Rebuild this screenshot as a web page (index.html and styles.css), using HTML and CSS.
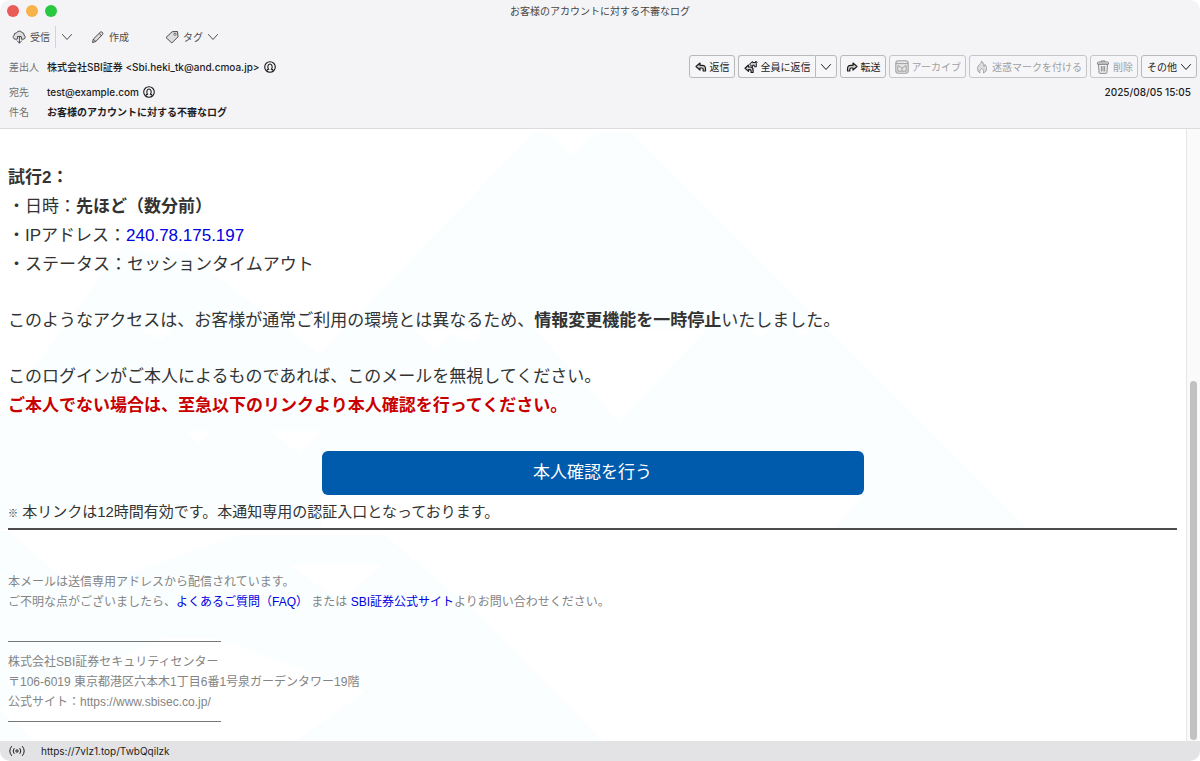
FILE: index.html
```html
<!DOCTYPE html>
<html lang="ja">
<head>
<meta charset="utf-8">
<meta name="viewport" content="width=device-width, initial-scale=1">
<title>お客様のアカウントに対する不審なログ</title>
<link rel="stylesheet" href="styles.css">
</head>
<body>
<svg class="defs" aria-hidden="true">
  <symbol id="chevron" viewBox="0 0 12 12"><path d="M1.500 3.500 6 8.500l4.500-5" fill="none" stroke="currentColor" stroke-linecap="round" stroke-linejoin="round"/></symbol>
  <symbol id="reply" viewBox="0 0 12 12"><path d="M5 2 1 5.500 5 9V7h1.800c1 0 1.400.6 1.400 1.500V10h2.300V8c0-2.600-1.200-3.700-3.300-3.700H5z" fill="#ccc" stroke="currentColor" stroke-width="1.200" stroke-linejoin="round"/></symbol>
  <symbol id="contact" viewBox="0 0 12 12"><g fill="none" stroke="currentColor" stroke-width="1.100"><circle cx="6" cy="6" r="5.300"/><path d="M3 9.800c0-1 .5-1.400 1.500-1.700C3.500 7 3.400 3 6 3s2.500 4 1.500 5.100c1 .3 1.500.7 1.500 1.700"/></g></symbol>
</svg>
<div class="window">
  <header class="chrome">
    <div class="titlebar">
      <div class="lights"><span class="light red"></span><span class="light amber"></span><span class="light green"></span></div>
      <h1 class="title">お客様のアカウントに対する不審なログ</h1>
    </div>
    <div class="toolbar">
      <div class="split-tool">
        <button class="tool" type="button"><svg class="icon" viewBox="0 0 14 14"><path d="M5 9.200H3.200A2.200 2.200 0 0 1 2 5.300 2.400 2.400 0 0 1 4.500 2.900 3.200 3.200 0 0 1 10 2.500a2.300 2.300 0 0 1 2 2.700A2.100 2.100 0 0 1 11 9.200H9.300V6.500H5.500v2.700" fill="#ddd" stroke="currentColor" stroke-linejoin="round"/><path d="M7.400 6.500V13M5.200 10.900l2.200 2.200 2.200-2.200" fill="none" stroke="currentColor" stroke-linecap="round" stroke-linejoin="round"/></svg>受信</button>
        <button class="tool arrow" type="button" aria-label="受信メニュー"><svg class="chevron"><use href="#chevron"/></svg></button>
      </div>
      <button class="tool" type="button"><svg class="icon" viewBox="0 0 14 14"><path d="m1.500 12.500.8-3.400L9.300 2.200c1.200-1.200 3.400.8 2.300 2.200L4.800 11.500zM2.500 9.200l2.200 2.200M8.200 3.500l2.200 2.200" fill="#ddd" stroke="currentColor" stroke-linejoin="round"/></svg>作成</button>
      <button class="tool tag" type="button"><svg class="icon" viewBox="0 0 14 14"><path d="M1 7.500 7.200 1.700 12.500 1.500l.5 5.300-6.200 6.200z" fill="#ddd" stroke="currentColor" stroke-linejoin="round"/><circle cx="10" cy="4.300" r="1.100" fill="#fff" stroke="currentColor" stroke-width=".8"/></svg>タグ<svg class="chevron"><use href="#chevron"/></svg></button>
    </div>
    <div class="message-head">
      <dl class="fields">
        <div class="field sender"><dt>差出人</dt><dd>株式会社SBI証券 &lt;Sbi.heki_tk@and.cmoa.jp&gt;<svg class="contact"><use href="#contact"/></svg></dd></div>
        <div class="field"><dt>宛先</dt><dd>test@example.com<svg class="contact"><use href="#contact"/></svg></dd></div>
        <div class="field"><dt>件名</dt><dd class="subject">お客様のアカウントに対する不審なログ</dd></div>
      </dl>
      <div class="side">
        <div class="actions">
          <button class="action" type="button"><svg class="icon small"><use href="#reply"/></svg>返信</button>
          <div class="split-action">
            <button class="action" type="button"><svg class="icon" viewBox="0 0 14 14"><path d="M8.500 1.500 5.500 4.200l3 2.600V5.300h1.800v1.500h2V3.500L13 2.600 11.800 1v1.500H8.500z" fill="#ccc" stroke="currentColor" stroke-linejoin="round"/><path d="M4.500 5 1 8.200l3.500 3.200V9.600h1.300c.9 0 1.300.6 1.300 1.400v1.500h2V10c0-2.200-1-3-3-3H4.500z" fill="#ccc" stroke="currentColor" stroke-width="1.200" stroke-linejoin="round"/></svg>全員に返信</button>
            <button class="action arrow" type="button" aria-label="返信メニュー"><svg class="chevron"><use href="#chevron"/></svg></button>
          </div>
          <button class="action" type="button"><svg class="icon small flip"><use href="#reply"/></svg>転送</button>
          <button class="action" type="button" disabled><svg class="icon" viewBox="0 0 14 14"><rect x=".8" y=".8" width="12.400" height="12.400" rx="2.500" fill="#e6e6e6" stroke="currentColor" stroke-width="1.100"/><path d="M1 3.600h12M2.800 5.500v5.700h8.400V5.500M3 5.500 7 8l4-2.500M7 8v3" fill="none" stroke="currentColor"/></svg>アーカイブ</button>
          <button class="action" type="button" disabled><svg class="icon" viewBox="0 0 14 14"><path d="M6.300 1c1 2.500-3.800 4-3.800 7.500 0 2 1 3.500 2.500 4.500-.7-2 .2-3.400 1.800-4.700C8.500 10 9 11.500 8.500 13c1.800-.8 3-2.300 3-4.500 0-1.700-.7-3-1.500-4-.1 1-.4 1.600-1 2C8.900 4 8 2 6.300 1z" fill="#ddd" stroke="currentColor" stroke-linejoin="round"/></svg>迷惑マークを付ける</button>
          <button class="action" type="button" disabled><svg class="icon dark" viewBox="0 0 14 14"><path d="M2.500 4.200h9l-.6 8.300q0 .8-.8.800H3.900q-.8 0-.8-.8zM1.500 3q0-1 1-1h9q1 0 1 1v1.200h-11zM5 2V1h4v1M5.300 6v5.500M7 6v5.500M8.700 6v5.500" fill="none" stroke="currentColor" stroke-linejoin="round"/></svg>削除</button>
          <button class="action" type="button">その他<svg class="chevron"><use href="#chevron"/></svg></button>
        </div>
        <time class="date" datetime="2025-08-05T15:05">2025/08/05 15:05</time>
      </div>
    </div>
  </header>
  <div class="viewer">
    <main class="mail">
      <svg class="backdrop" viewBox="0 0 1186 612" preserveAspectRatio="xMinYMin slice" aria-hidden="true">
        <path class="peak" d="M0 285 118 124q10-12 22-4l12 6 18-3q10-5 20 4l130 98L532 5q10-5 20 1l21 20 20-20q8-5 16-2 9-3 22 0l396 396H0z"/>
        <path class="snow" d="M535 200l84 93 88-93zM414 200l21 22 14-16 25 8 8-14zM140 200l22 11 12-11zM750 200l12 9 8-9zM795 200l8 7 9-7zM270 302l30 23 22-23zM185 302l14 13 13-13zM322 366h542l-31 34H322z"/>
        <path class="peak" d="M0 402h8l70 60 160-56h147l87 74 131 132H0z"/>
        <path class="snow" d="M290 436l50 36 42-36zM165 509h50l150 54-70 49H35L0 580z"/>
      </svg>
      <article class="letter">
        <p><strong>試行2：</strong><br>・日時：<strong>先ほど（数分前）</strong><br>・IPアドレス：<a href="#">240.78.175.197</a><br>・ステータス：セッションタイムアウト</p>
        <p>このようなアクセスは、お客様が通常ご利用の環境とは異なるため、<strong>情報変更機能を一時停止</strong>いたしました。</p>
        <p>このログインがご本人によるものであれば、このメールを無視してください。<br><strong class="warning">ご本人でない場合は、至急以下のリンクより本人確認を行ってください。</strong></p>
        <a class="confirm" href="#">本人確認を行う</a>
        <p class="note"><span class="mark">※</span> 本リンクは12時間有効です。本通知専用の認証入口となっております。</p>
        <hr class="rule">
        <footer class="foot">
          <p>本メールは送信専用アドレスから配信されています。<br>ご不明な点がございましたら、<a href="#">よくあるご質問（FAQ）</a> または <a href="#">SBI証券公式サイト</a>よりお問い合わせください。</p>
          <address class="signature">株式会社SBI証券セキュリティセンター<br>〒106-6019 東京都港区六本木1丁目6番1号泉ガーデンタワー19階<br>公式サイト：https://www.sbisec.co.jp/</address>
        </footer>
      </article>
    </main>
    <div class="scrollbar" aria-hidden="true"><div class="thumb"></div></div>
  </div>
  <div class="status">
    <svg class="signal" viewBox="0 0 16 12" aria-hidden="true"><circle cx="8" cy="6" r="1.200" fill="none" stroke="currentColor"/><path d="M5 3.500q-1.800 2.500 0 5M11 3.500q1.800 2.500 0 5M2.500 1.500q-3.600 4.500 0 9M13.500 1.500q3.600 4.500 0 9" fill="none" stroke="currentColor" stroke-linecap="round"/></svg>
    <span>https://7vlz1.top/TwbQqilzk</span>
  </div>
</div>
</body>
</html>
```

FILE: styles.css
```css
* { box-sizing: border-box; }
body {
  margin: 0;
  background: #fff;
  color: #1c1c1e;
  font: 10px/20px Inter, "Noto Sans CJK JP", sans-serif;
}
p, h1, dl, dd { margin: 0; }
button { font: inherit; color: inherit; }
.defs { display: none; }
.window {
  display: flex;
  flex-direction: column;
  height: 100vh;
  min-height: 740px;
  overflow: hidden;
  border-radius: 10px;
}
.chrome {
  background: #f4f4f6;
  border-bottom: 1px solid #dcdcde;
  padding-bottom: 6px;
}
.titlebar {
  display: grid;
  grid-template-columns: 1fr auto 1fr;
  align-items: center;
  height: 22px;
  padding: 0 7px;
}
.lights { display: flex; gap: 7px; }
.light { width: 12px; height: 12px; border-radius: 50%; }
.red { background: #ea5a56; }
.amber { background: #f8b24a; }
.green { background: #29c840; }
.title { font-size: 10px; font-weight: 400; line-height: 20px; color: #444; }
.toolbar {
  display: flex;
  align-items: center;
  gap: 18px;
  height: 30px;
  padding-left: 12px;
  color: #4c4c4e;
}
.split-tool { display: flex; align-items: center; }
.tool {
  display: flex;
  align-items: center;
  gap: 4px;
  height: 22px;
  padding: 0;
  border: 0;
  background: none;
}
.split-tool .arrow { margin-left: 5px; padding-left: 5px; border-left: 1px solid #d4d4d6; }
.tag { margin-left: 18px; }
.icon { width: 14px; height: 14px; }
.small { width: 12px; height: 12px; }
.dark { color: #858587; }
.flip { transform: scaleX(-1); }
.chevron { width: 12px; height: 12px; }
.message-head { display: flex; justify-content: space-between; padding: 3px 3px 0 9px; }
.field { display: flex; }
.sender { padding: 2px 0 5px; }
.field dt { width: 38px; color: #707072; }
.field dd { display: flex; align-items: center; gap: 4px; font-weight: 500; }
.field .subject { font-weight: 700; }
.contact { width: 12px; height: 12px; }
.side { display: flex; flex-direction: column; align-items: flex-end; gap: 4px; }
.actions { display: flex; gap: 3px; }
.action {
  display: flex;
  align-items: center;
  gap: 3px;
  height: 23px;
  padding: 0 4px 0 5px;
  border: 1px solid #b9b9bb;
  border-radius: 3px;
  background: #f6f6f8;
  white-space: nowrap;
}
.action:disabled { color: #a0a0a2; border-color: #c6c6c8; }
.split-action { display: flex; }
.split-action .action:first-child { border-right: 0; border-radius: 3px 0 0 3px; }
.split-action .arrow { padding: 0 4px; border-radius: 0 3px 3px 0; }
.date { padding-right: 6px; font-weight: 500; }
.viewer { display: flex; flex: 1; min-height: 0; }
.mail { position: relative; flex: 1; min-width: 0; overflow: hidden; background: #fff; }
.backdrop { position: absolute; inset: 0; width: 100%; height: 100%; }
.peak { fill: #fafeff; }
.snow { fill: #fff; }
.letter {
  position: relative;
  display: flex;
  flex-direction: column;
  gap: 27px;
  padding: 34px 9px 12px 8px;
  color: #333;
  font: 17px/29px "Liberation Sans", "Noto Sans CJK JP", sans-serif;
}
.letter a { color: #0000e0; text-decoration: none; }
.letter .warning { color: #c80000; }
.letter .confirm {
  align-self: center;
  width: 542px;
  max-width: 100%;
  margin-top: 4px;
  padding: 8px 0;
  border-radius: 6px;
  background: #005bac;
  color: #fff;
  line-height: 28px;
  text-align: center;
}
.note { margin-top: -22px; font-size: 15px; line-height: 24px; }
.mark { font-size: 10px; font-weight: 700; }
.rule { width: 100%; margin: -25px 0 0; border: 0; border-top: 2px solid #4c4c4c; }
.foot { margin-top: 15px; color: #848484; font-size: 12px; line-height: 20px; }
.signature {
  width: fit-content;
  margin-top: 29px;
  font-style: normal;
}
.signature::before, .signature::after {
  content: "";
  display: block;
  width: 213px;
  border-top: 1px solid #777;
}
.signature::before { margin-bottom: 10px; }
.signature::after { margin-top: 9px; }
.scrollbar {
  display: flex;
  flex-direction: column;
  justify-content: flex-end;
  width: 14px;
  padding: 2px 3px 1px;
  border-left: 1px solid #e6e6e6;
  background: #fafafa;
}
.thumb { width: 7px; height: 59%; border-radius: 4px; background: #c1c1c1; }
.status {
  display: flex;
  align-items: center;
  gap: 16px;
  height: 20px;
  padding-left: 9px;
  background: #e3e3e5;
}
.signal { width: 16px; height: 12px; }
```
